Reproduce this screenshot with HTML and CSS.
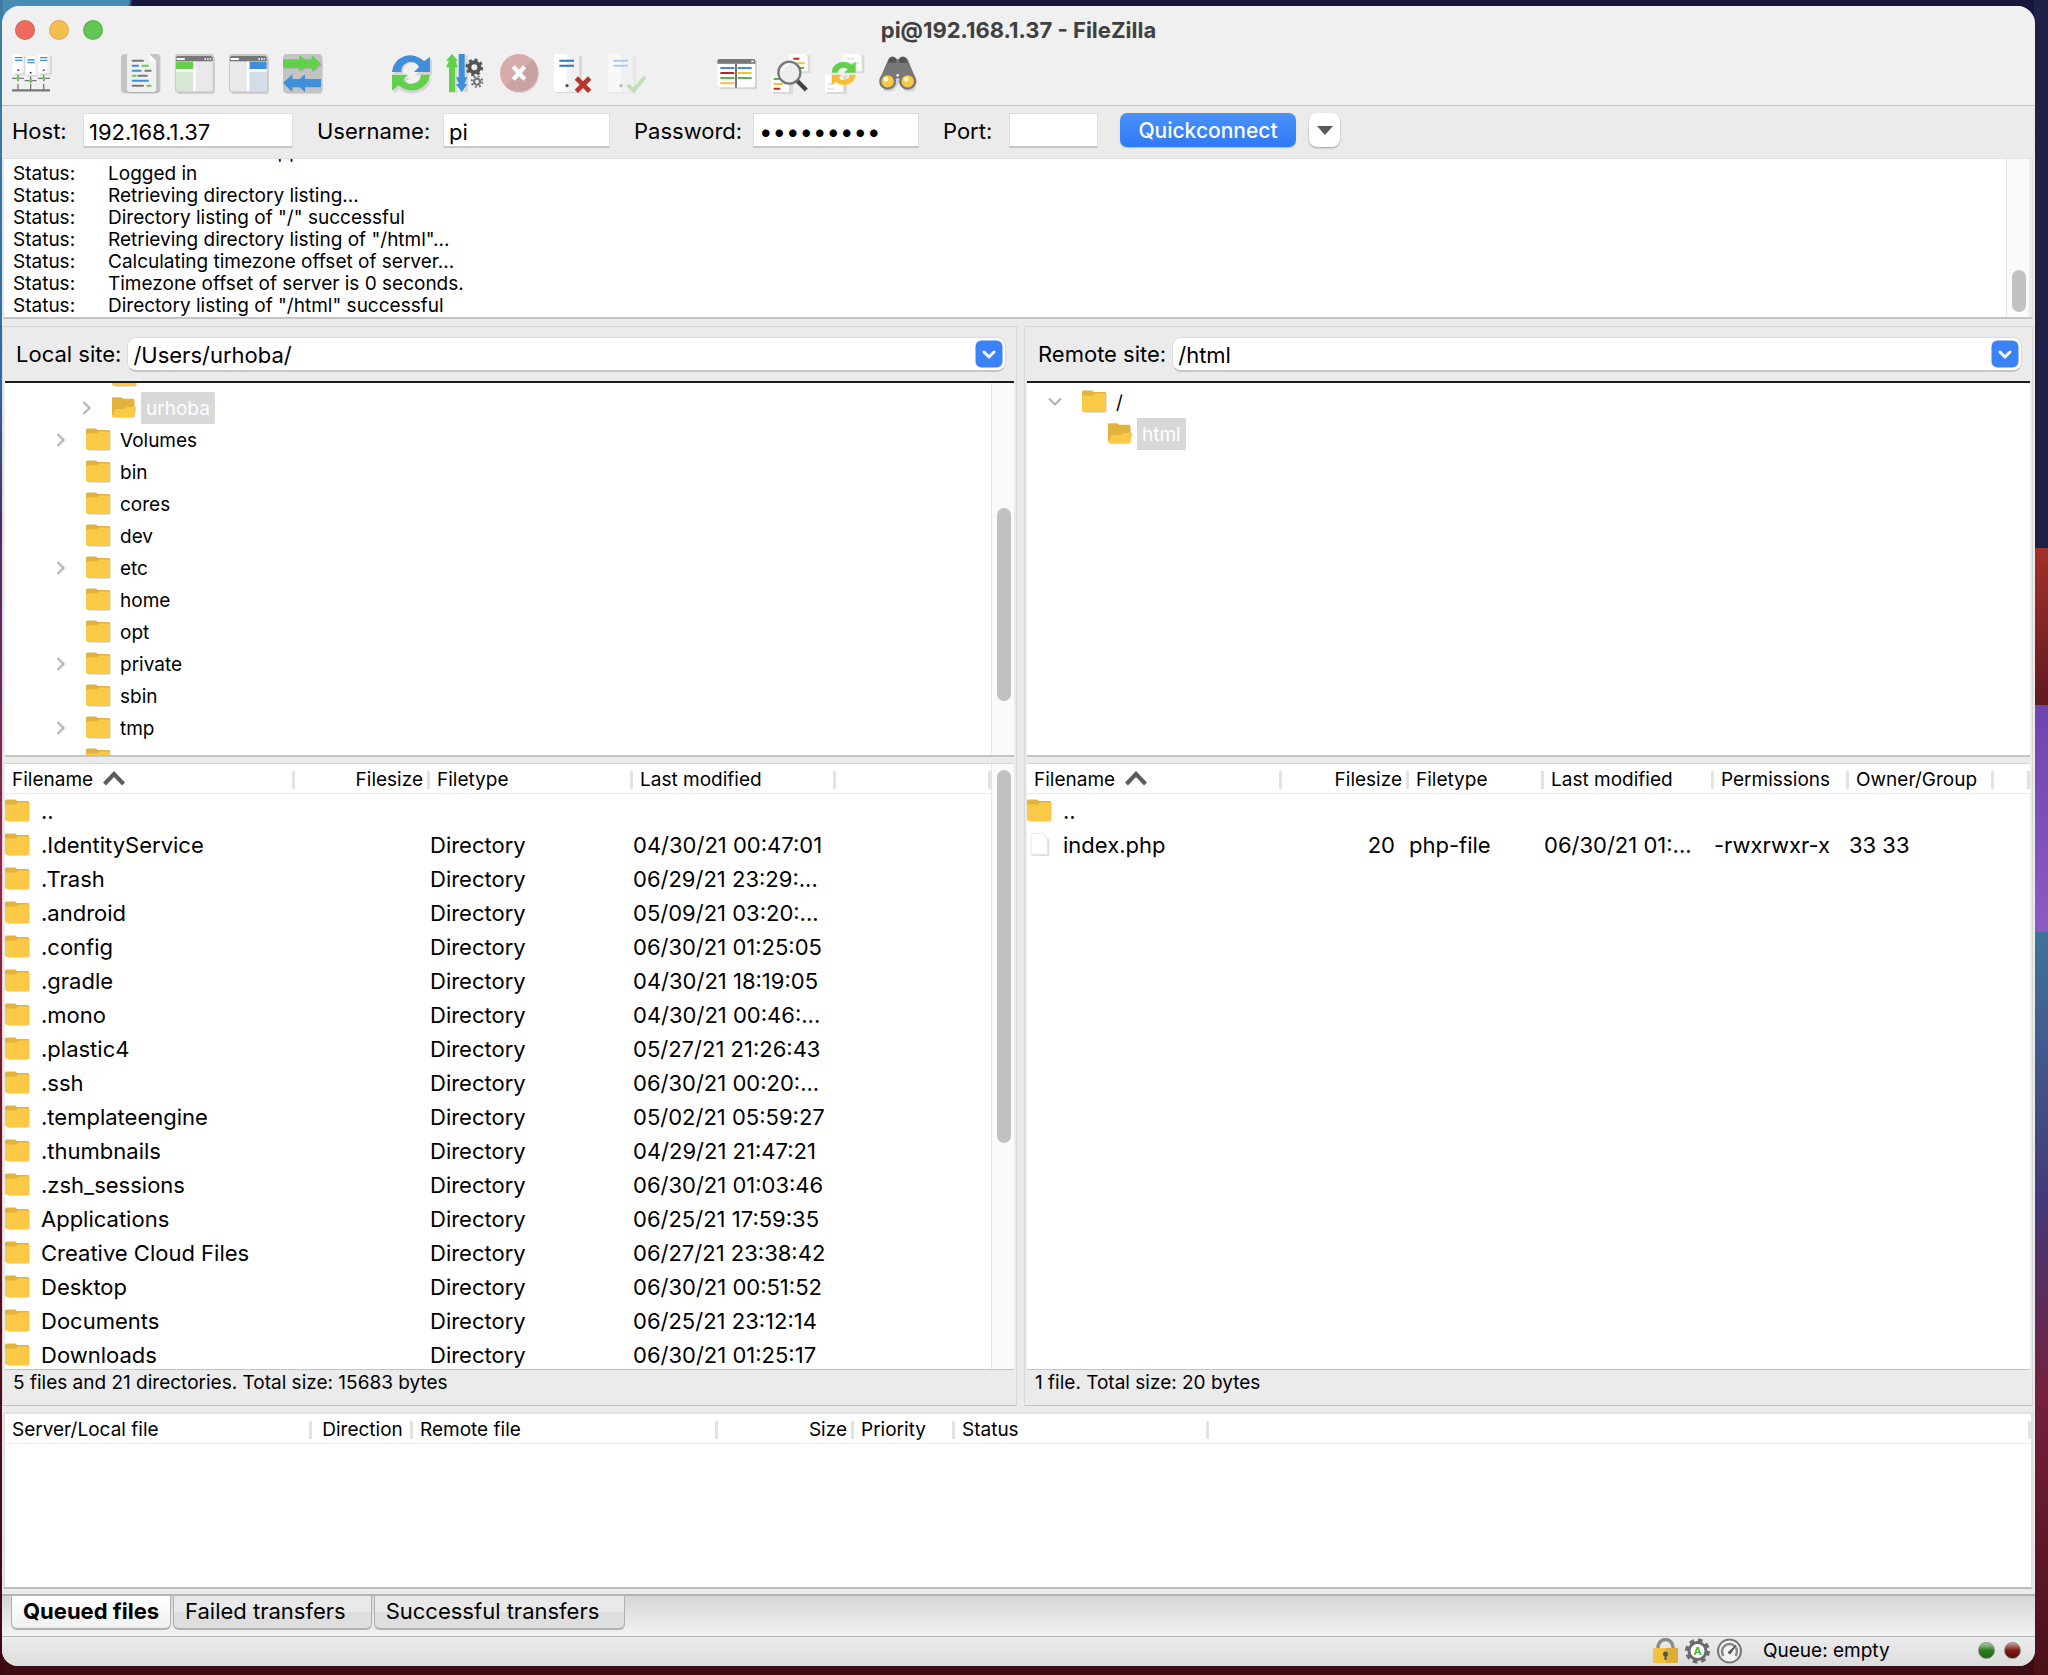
FILE: index.html
```
<!DOCTYPE html>
<html lang="en">
<head>
    <meta charset="UTF-8">
    <meta name="viewport" content="width=device-width, initial-scale=1.0">
    <title>pi@192.168.1.37 - FileZilla</title>
    <link rel="stylesheet" href="styles.css">
</head>
<body>

    <!-- shared icons -->
    <svg class="sprite" aria-hidden="true">
        <symbol id="folder" viewBox="0 0 26 24">
            <path d="M2 3h21a2 2 0 0 1 2 2v16a2 2 0 0 1-2 2H3z" fill="#dedede"/>
            <path d="M0 2a1.500 1.500 0 0 1 1.500-1.500H10l2 1.500h11a1 1 0 0 1 1 1v6H0z" fill="#e2b33c"/>
            <path d="M0 5.500h10.500l3-2H23a1 1 0 0 1 1 1V20a2 2 0 0 1-2 2H2a2 2 0 0 1-2-2z" fill="#fac945"/>
        </symbol>
        <symbol id="folder-open" viewBox="0 0 28 24">
            <path d="M2 4h23v17l-2 2H3z" fill="#dedede"/>
            <path d="M0 2a1.500 1.500 0 0 1 1.500-1.500H10l2 1.500h11a1 1 0 0 1 1 1v17H0z" fill="#e2b33c"/>
            <path d="M0 22l3.500-9h10l2.500-2h10.500L24 20.500a2 2 0 0 1-2 1.500z" fill="#fac945"/>
        </symbol>
        <symbol id="file" viewBox="0 0 26 26">
            <path d="M5 1h12l6 6v17a1 1 0 0 1-1 1H5a1 1 0 0 1-1-1V2a1 1 0 0 1 1-1z" fill="#dcdcdc"/>
            <path d="M4 .5h12L21 6v17H3.500V1z" fill="#fff" stroke="#e6e6e6"/>
        </symbol>
        <symbol id="right" viewBox="0 0 10 14">
            <path d="M1.500 1l6 6-6 6" fill="none" stroke="#b4b4b4" stroke-width="2.200"/>
        </symbol>
        <symbol id="down" viewBox="0 0 14 10">
            <path d="M1 1.500l6 6 6-6" fill="none" stroke="#b4b4b4" stroke-width="2.200"/>
        </symbol>
        <symbol id="sort" viewBox="0 0 24 15">
            <path d="M2.500 13L12 3l9.500 10" fill="none" stroke="#5c5c5c" stroke-width="4"/>
        </symbol>
        <symbol id="pick" viewBox="0 0 28 28">
            <rect x=".5" y=".5" width="27" height="27" rx="6" fill="#3a82f7"/>
            <path d="M9 12l5 5 5-5" fill="none" stroke="#fff" stroke-width="3" stroke-linecap="round" stroke-linejoin="round"/>
        </symbol>
    </svg>

    <main class="window">
        <header class="top">
            <div class="titlebar">
                <div class="lights">
                    <button class="light close" aria-label="Close"></button>
                    <button class="light minimize" aria-label="Minimize"></button>
                    <button class="light maximize" aria-label="Maximize"></button>
                </div>
                <h1>pi@192.168.1.37 - FileZilla</h1>
            </div>

            <div class="toolbar">
                <button aria-label="Site Manager">
                    <svg viewBox="0 0 120 120">
                        <g fill="#d9d9d9"><path d="M8 6h32v58H8zM46 12h32v56H46zM84 6h36v58H84z"/></g>
                        <g fill="#fff"><path d="M0 0h30v58H0zM41 7h30v56H41zM77 0h30v58H77z"/></g>
                        <g fill="#f0f0f0"><path d="M30 0l6 5v50l-6 3zM71 7l6 5v50l-6 3zM107 0l7 5v50l-7 3z"/></g>
                        <g stroke="#3f8fdb" stroke-width="4"><path d="M9 11h22M9 19h22M46 18h22M46 26h22M84 11h22M84 19h22"/></g>
                        <g stroke="#777" stroke-width="4"><path d="M0 73h36M38 80h36M78 73h36M18 62v20M56 68v20M95 62v20M18 90v20M56 90v20M95 90v20"/></g>
                        <path d="M0 109h114" stroke="#777" stroke-width="7"/>
                        <g fill="#444"><circle cx="19" cy="49" r="3"/><circle cx="56" cy="56" r="3"/><circle cx="95" cy="49" r="3"/></g>
                        <g fill="#62d04b"><circle cx="18" cy="73" r="5"/><circle cx="56" cy="80" r="5"/><circle cx="95" cy="73" r="5"/></g>
                    </svg>
                </button>
                <span class="space"></span>
                <button aria-label="Toggle message log">
                    <svg viewBox="0 0 120 120">
                        <rect width="118" height="118" rx="12" fill="#c4c4c4"/>
                        <path d="M26 6h64l20 20v86a6 6 0 0 1-6 6H26z" fill="#b5b5b5"/>
                        <path d="M20 0h64l22 22v84a8 8 0 0 1-8 8H26a8 8 0 0 1-8-8V2z" fill="#f0f0f0"/>
                        <path d="M84 0l22 22H90a6 6 0 0 1-6-6z" fill="#fff"/>
                        <g fill="none" stroke-width="6" stroke-linecap="round">
                            <path d="M35 20h31M73 50h16M52 65h26M35 95h31" stroke="#777"/>
                            <path d="M35 35h16M35 50h24M35 80h46" stroke="#3f8fdb"/>
                            <path d="M64 35h17M35 65h9M79 95h10" stroke="#62d04b"/>
                        </g>
                    </svg>
                </button>
                <button aria-label="Toggle local directory tree">
                    <svg viewBox="0 0 120 120">
                        <rect x="6" y="6" width="114" height="114" rx="10" fill="#cfcfcf"/>
                        <rect width="116" height="116" rx="10" fill="#c9c9c9"/>
                        <path d="M3 22h110v82a8 8 0 0 1-8 8H11a8 8 0 0 1-8-8z" fill="#e9e9e9"/>
                        <path d="M3 22V12q0-6 6-6h98q6 0 6 6v10z" fill="#777"/>
                        <path d="M7 15h20" stroke="#fff" stroke-width="6" stroke-linecap="round"/>
                        <path d="M88 15h20" stroke="#fff" stroke-width="5" stroke-dasharray="5 3"/>
                        <path d="M3 23h52v22H3z" fill="#62d04b"/><path d="M3 45h52v8H3z" fill="#fff"/>
                        <path d="M3 53h52v59H10q-7 0-7-7z" fill="#d6e8d4"/><path d="M55 23h7v89h-7z" fill="#fff"/>
                    </svg>
                </button>
                <button aria-label="Toggle remote directory tree">
                    <svg viewBox="0 0 120 120">
                        <rect x="6" y="6" width="114" height="114" rx="10" fill="#cfcfcf"/>
                        <rect width="116" height="116" rx="10" fill="#c9c9c9"/>
                        <path d="M3 22h110v82a8 8 0 0 1-8 8H11a8 8 0 0 1-8-8z" fill="#e9e9e9"/>
                        <path d="M3 22V12q0-6 6-6h98q6 0 6 6v10z" fill="#777"/>
                        <path d="M7 15h20" stroke="#fff" stroke-width="6" stroke-linecap="round"/>
                        <path d="M88 15h20" stroke="#fff" stroke-width="5" stroke-dasharray="5 3"/>
                        <path d="M61 23h52v22H61z" fill="#3f8fdb"/><path d="M61 45h52v8H61z" fill="#fff"/>
                        <path d="M61 53h52v52q0 7-7 7H61z" fill="#d3dde8"/><path d="M54 23h7v89h-7z" fill="#fff"/>
                    </svg>
                </button>
                <button aria-label="Toggle transfer queue">
                    <svg viewBox="0 0 120 120">
                        <rect x="5" y="5" width="115" height="115" rx="12" fill="#dadada"/>
                        <rect width="118" height="118" rx="12" fill="#c4c4c4"/>
                        <path d="M4 22h50v-6l14 10h22V10l28 24-28 20V44H68L56 53v-9H4z" fill="#acacac"/>
                        <path d="M0 16h48V3l18 13h20V3l27 25-27 25V41H66L48 53V41H0z" fill="#62d04b"/>
                        <path d="M0 87l28-26v14h22l16-14v14h48v25H66v14L50 100H28v14z" fill="#3f8fdb"/>
                    </svg>
                </button>
                <span class="space"></span>
                <button aria-label="Refresh">
                    <svg viewBox="0 0 120 120">
                        <path d="M6 60a55 52 0 0 1 98-34l16-12v50H70l18-18A28 26 0 0 0 34 60zM6 118V72h48L38 88a30 26 0 0 0 50-14h30A57 50 0 0 1 22 104z" fill="#d5d5d5"/>
                        <path d="M0 54A55 54 0 0 1 96 22l18-14v46H66l15-15A28 28 0 0 0 28 54z" fill="#3f8fdb"/>
                        <path d="M114 62a55 52 0 0 1-94 32L0 110V62h48L34 77a28 25 0 0 0 52-15z" fill="#62d04b"/>
                    </svg>
                </button>
                <button aria-label="Process queue">
                    <svg viewBox="0 0 120 120">
                        <path d="M10 116V22h24v94zM44 4h22v110H44z" fill="#d8d8d8"/>
                        <path d="M0 20L18 0l18 20H28l8 20h-9v74H9V40H0l9-20z" fill="#62d04b"/>
                        <path d="M38 0h18v70h8l-9 20h9l-17 24-17-24h9l-9-20h8z" fill="#3f8fdb"/>
                        <g fill="none" stroke="#555">
                            <circle cx="85" cy="40" r="15" stroke-width="12"/>
                            <circle cx="85" cy="40" r="23" stroke-width="7" stroke-dasharray="9 9.060"/>
                            <circle cx="93" cy="83" r="9" stroke-width="7" stroke="#777"/>
                            <circle cx="93" cy="83" r="16" stroke-width="6" stroke="#777" stroke-dasharray="6 6.570"/>
                        </g>
                    </svg>
                </button>
                <button aria-label="Cancel" disabled>
                    <svg viewBox="0 0 120 120">
                        <circle cx="61" cy="61" r="57" fill="#ddd"/>
                        <circle cx="57" cy="57" r="57" fill="#d8acaa"/>
                        <path d="M98 16a57 57 0 0 1-81 81z" fill="#c9a3a1"/>
                        <path d="M40 38l34 38M74 38L40 76" stroke="#fff" stroke-width="13"/>
                    </svg>
                </button>
                <button aria-label="Disconnect">
                    <svg viewBox="0 0 120 120">
                        <path d="M8 6h76v112H8z" fill="#d9d9d9"/><path d="M3 0h50v114H8q-8 0-8-8V3q0-3 3-3z" fill="#fff"/>
                        <path d="M39 0h28l8 8v98l-8 8H39z" fill="#f1f1f1"/>
                        <path d="M16 20h44M16 35h44" stroke="#3274c4" stroke-width="6"/>
                        <circle cx="39" cy="95" r="5" fill="#555"/>
                        <path d="M67 72l40 40M107 72l-40 40" stroke="#b6352c" stroke-width="14"/>
                    </svg>
                </button>
                <button aria-label="Reconnect" disabled>
                    <svg viewBox="0 0 120 120">
                        <path d="M8 6h76v112H8z" fill="#e7e7e7"/><path d="M3 0h50v114H8q-8 0-8-8V3q0-3 3-3z" fill="#f8f8f8"/>
                        <path d="M39 0h28l8 8v98l-8 8H39z" fill="#f0f0f0"/>
                        <path d="M16 20h44M16 35h44" stroke="#b3c9e8" stroke-width="6"/>
                        <circle cx="39" cy="95" r="5" fill="#bbb"/>
                        <path d="M59 94l18 15 34-40" fill="none" stroke="#bfe0b6" stroke-width="12"/>
                    </svg>
                </button>
                <span class="space"></span>
                <button aria-label="Directory listing filters">
                    <svg viewBox="0 0 120 120">
                        <path d="M7 20h113v86H7z" fill="#d5d5d5"/>
                        <path d="M2 30h112v62q0 8-8 8H10q-8 0-8-8z" fill="#fff"/>
                        <path d="M1 29V21q0-6 6-6h102q6 0 6 6v8z" fill="#777"/>
                        <path d="M103 22h7" stroke="#fff" stroke-width="5"/>
                        <g stroke-width="6"><path d="M10 42h42M62 42h42" stroke="#3f8fdb"/><path d="M10 57h42" stroke="#b9291c"/><path d="M10 72h42M62 72h42" stroke="#52b93f"/><path d="M10 88h42M62 57h42" stroke="#f3c13d"/></g>
                        <path d="M57 29v72" stroke="#777" stroke-width="6"/>
                    </svg>
                </button>
                <button aria-label="Directory comparison">
                    <svg viewBox="0 0 120 120">
                        <path d="M58 4h60v54H58zM6 64h60v58H6z" fill="#dadada"/>
                        <path d="M54 0h48l8 8v44H54zM0 62h54v52H6q-6 0-6-6z" fill="#fff"/>
                        <g stroke-width="6"><path d="M67 14h18M8 104h20" stroke="#b9291c"/><path d="M78 28h24M8 90h28" stroke="#f3c13d"/><path d="M85 42h14M8 75h18" stroke="#52b93f"/></g>
                        <path d="M76 78l30 30" stroke="#444" stroke-width="13"/>
                        <circle cx="55" cy="56" r="33" fill="#ededed" stroke="#777" stroke-width="7"/>
                        <path d="M33 52q4-18 20-20" stroke="#fff" stroke-width="6" fill="none"/>
                    </svg>
                </button>
                <button aria-label="Synchronized browsing">
                    <svg viewBox="0 0 120 120">
                        <path d="M58 4h60v54H58zM6 64h60v58H6z" fill="#dadada"/>
                        <path d="M54 0h48l8 8v44H54zM0 62h54v52H6q-6 0-6-6z" fill="#fff"/>
                        <path d="M67 14h20M67 28h36M8 90h20M8 104h20" stroke="#e5e5e5" stroke-width="6"/>
                        <path d="M20 56a36 34 0 0 1 60-24l12-9v33H58l10-10a18 18 0 0 0-30 10z" fill="#62d04b"/>
                        <path d="M92 62a36 34 0 0 1-60 22l-12 9V62h32L42 72a18 16 0 0 0 32-10z" fill="#f5bf35"/>
                    </svg>
                </button>
                <button aria-label="Search remote files">
                    <svg viewBox="0 0 120 120">
                        <path d="M10 78L38 18q10-12 18 2 12-14 24 0l36 60-10 32H78l-18-24-18 24H14z" fill="#d2d2d2"/>
                        <path d="M2 76L28 16q10-16 24-2 4 4 8 0 14-14 26 2l25 60-24 12-31-16-28 16z" fill="#777"/>
                        <path d="M30 14q10-12 22 0v12H27zM60 14q12-12 22 0l4 12H60z" fill="#555"/>
                        <circle cx="26" cy="82" r="22" fill="#fac945" stroke="#777" stroke-width="7"/>
                        <circle cx="86" cy="82" r="22" fill="#fac945" stroke="#777" stroke-width="7"/>
                        <circle cx="21" cy="76" r="7" fill="#fff6d8"/><circle cx="82" cy="76" r="7" fill="#fff6d8"/>
                        <circle cx="56" cy="64" r="4" fill="#fff"/>
                    </svg>
                </button>
            </div>
        </header>

        <form class="quickconnect">
            <label for="host">Host:</label>
            <input class="field" type="text" id="host" value="192.168.1.37">
            <label for="username">Username:</label>
            <input class="field" type="text" id="username" value="pi">
            <label for="password">Password:</label>
            <input class="field" type="password" id="password" value="raspberry">
            <label for="port">Port:</label>
            <input class="field" type="text" id="port">
            <button type="button" class="connect">Quickconnect</button>
            <button type="button" class="history" aria-label="History">
                <svg viewBox="0 0 16 9"><path d="M0 0h16L8 9z" fill="#5a5a5a"/></svg>
            </button>
        </form>

        <section class="log">
            <dl>
                <dt>Status:</dt><dd>Server does not support non-ASCII characters.</dd>
                <dt>Status:</dt><dd>Logged in</dd>
                <dt>Status:</dt><dd>Retrieving directory listing...</dd>
                <dt>Status:</dt><dd>Directory listing of "/" successful</dd>
                <dt>Status:</dt><dd>Retrieving directory listing of "/html"...</dd>
                <dt>Status:</dt><dd>Calculating timezone offset of server...</dd>
                <dt>Status:</dt><dd>Timezone offset of server is 0 seconds.</dd>
                <dt>Status:</dt><dd>Directory listing of "/html" successful</dd>
            </dl>
            <div class="scrollbar log-scroll"><span class="thumb"></span></div>
        </section>

        <div class="panes">
            <section class="pane">
                <div class="site">
                    <label for="local-site">Local site:</label>
                    <div class="combo">
                        <select id="local-site"><option>/Users/urhoba/</option></select>
                        <svg><use href="#pick"/></svg>
                    </div>
                </div>
                <div class="tree">
                    <ul class="scrolled">
                        <li class="deep"><svg class="folder"><use href="#folder"/></svg></li>
                        <li class="deep"><svg class="arrow"><use href="#right"/></svg><svg class="folder"><use href="#folder-open"/></svg><span class="selected">urhoba</span></li>
                        <li><svg class="arrow"><use href="#right"/></svg><svg class="folder"><use href="#folder"/></svg><span>Volumes</span></li>
                        <li><svg class="folder"><use href="#folder"/></svg><span>bin</span></li>
                        <li><svg class="folder"><use href="#folder"/></svg><span>cores</span></li>
                        <li><svg class="folder"><use href="#folder"/></svg><span>dev</span></li>
                        <li><svg class="arrow"><use href="#right"/></svg><svg class="folder"><use href="#folder"/></svg><span>etc</span></li>
                        <li><svg class="folder"><use href="#folder"/></svg><span>home</span></li>
                        <li><svg class="folder"><use href="#folder"/></svg><span>opt</span></li>
                        <li><svg class="arrow"><use href="#right"/></svg><svg class="folder"><use href="#folder"/></svg><span>private</span></li>
                        <li><svg class="folder"><use href="#folder"/></svg><span>sbin</span></li>
                        <li><svg class="arrow"><use href="#right"/></svg><svg class="folder"><use href="#folder"/></svg><span>tmp</span></li>
                        <li><svg class="folder"><use href="#folder"/></svg></li>
                    </ul>
                    <div class="scrollbar tree-scroll"><span class="thumb"></span></div>
                </div>
                <div class="files">
                    <div class="list">
                        <table>
                            <colgroup><col class="w-name"><col class="w-size"><col class="w-type"><col class="w-date"><col></colgroup>
                            <thead>
                                <tr><th>Filename<svg class="sort"><use href="#sort"/></svg></th><th class="num">Filesize</th><th>Filetype</th><th>Last modified</th><th></th></tr>
                            </thead>
                            <tbody>
                                <tr><td><svg class="folder"><use href="#folder"/></svg>..</td><td></td><td></td><td></td><td></td></tr>
                                <tr><td><svg class="folder"><use href="#folder"/></svg>.IdentityService</td><td></td><td>Directory</td><td>04/30/21 00:47:01</td><td></td></tr>
                                <tr><td><svg class="folder"><use href="#folder"/></svg>.Trash</td><td></td><td>Directory</td><td>06/29/21 23:29:...</td><td></td></tr>
                                <tr><td><svg class="folder"><use href="#folder"/></svg>.android</td><td></td><td>Directory</td><td>05/09/21 03:20:...</td><td></td></tr>
                                <tr><td><svg class="folder"><use href="#folder"/></svg>.config</td><td></td><td>Directory</td><td>06/30/21 01:25:05</td><td></td></tr>
                                <tr><td><svg class="folder"><use href="#folder"/></svg>.gradle</td><td></td><td>Directory</td><td>04/30/21 18:19:05</td><td></td></tr>
                                <tr><td><svg class="folder"><use href="#folder"/></svg>.mono</td><td></td><td>Directory</td><td>04/30/21 00:46:...</td><td></td></tr>
                                <tr><td><svg class="folder"><use href="#folder"/></svg>.plastic4</td><td></td><td>Directory</td><td>05/27/21 21:26:43</td><td></td></tr>
                                <tr><td><svg class="folder"><use href="#folder"/></svg>.ssh</td><td></td><td>Directory</td><td>06/30/21 00:20:...</td><td></td></tr>
                                <tr><td><svg class="folder"><use href="#folder"/></svg>.templateengine</td><td></td><td>Directory</td><td>05/02/21 05:59:27</td><td></td></tr>
                                <tr><td><svg class="folder"><use href="#folder"/></svg>.thumbnails</td><td></td><td>Directory</td><td>04/29/21 21:47:21</td><td></td></tr>
                                <tr><td><svg class="folder"><use href="#folder"/></svg>.zsh_sessions</td><td></td><td>Directory</td><td>06/30/21 01:03:46</td><td></td></tr>
                                <tr><td><svg class="folder"><use href="#folder"/></svg>Applications</td><td></td><td>Directory</td><td>06/25/21 17:59:35</td><td></td></tr>
                                <tr><td><svg class="folder"><use href="#folder"/></svg>Creative Cloud Files</td><td></td><td>Directory</td><td>06/27/21 23:38:42</td><td></td></tr>
                                <tr><td><svg class="folder"><use href="#folder"/></svg>Desktop</td><td></td><td>Directory</td><td>06/30/21 00:51:52</td><td></td></tr>
                                <tr><td><svg class="folder"><use href="#folder"/></svg>Documents</td><td></td><td>Directory</td><td>06/25/21 23:12:14</td><td></td></tr>
                                <tr><td><svg class="folder"><use href="#folder"/></svg>Downloads</td><td></td><td>Directory</td><td>06/30/21 01:25:17</td><td></td></tr>
                            </tbody>
                        </table>
                    </div>
                    <div class="scrollbar list-scroll"><span class="thumb"></span></div>
                </div>
                <p class="summary">5 files and 21 directories. Total size: 15683 bytes</p>
            </section>

            <section class="pane">
                <div class="site">
                    <label for="remote-site">Remote site:</label>
                    <div class="combo">
                        <select id="remote-site"><option>/html</option></select>
                        <svg><use href="#pick"/></svg>
                    </div>
                </div>
                <div class="tree">
                    <ul>
                        <li class="root"><svg class="arrow wide"><use href="#down"/></svg><svg class="folder"><use href="#folder"/></svg><span>/</span></li>
                        <li><svg class="folder"><use href="#folder-open"/></svg><span class="selected">html</span></li>
                    </ul>
                </div>
                <div class="files">
                    <div class="list">
                        <table>
                            <colgroup><col class="r-name"><col class="r-size"><col class="r-type"><col class="r-date"><col class="r-perm"><col class="r-owner"><col></colgroup>
                            <thead>
                                <tr><th>Filename<svg class="sort"><use href="#sort"/></svg></th><th class="num">Filesize</th><th>Filetype</th><th>Last modified</th><th>Permissions</th><th>Owner/Group</th><th></th></tr>
                            </thead>
                            <tbody>
                                <tr><td><svg class="folder"><use href="#folder"/></svg>..</td><td></td><td></td><td></td><td></td><td></td><td></td></tr>
                                <tr><td><svg class="folder"><use href="#file"/></svg>index.php</td><td class="num">20</td><td>php-file</td><td>06/30/21 01:...</td><td>-rwxrwxr-x</td><td>33 33</td><td></td></tr>
                            </tbody>
                        </table>
                    </div>
                </div>
                <p class="summary">1 file. Total size: 20 bytes</p>
            </section>
        </div>

        <section class="queue">
            <table>
                <colgroup><col class="q-server"><col class="q-dir"><col class="q-remote"><col class="q-size"><col class="q-prio"><col class="q-status"><col></colgroup>
                <thead>
                    <tr><th>Server/Local file</th><th class="mid">Direction</th><th>Remote file</th><th class="num">Size</th><th>Priority</th><th>Status</th><th></th></tr>
                </thead>
            </table>
        </section>

        <nav class="tabs">
            <button class="active">Queued files</button>
            <button>Failed transfers</button>
            <button>Successful transfers</button>
        </nav>

        <footer class="statusbar">
            <svg viewBox="0 0 25 26">
                <path d="M5 13V9a7.500 7.500 0 0 1 15 0v4" fill="none" stroke="#8c8c8c" stroke-width="3.500"/>
                <rect y="10" width="25" height="15" rx="1.500" fill="#f3c13d"/><path d="M12.500 10H25v13.500a1.500 1.500 0 0 1-1.500 1.500h-11z" fill="#ddae37"/>
                <circle cx="12.500" cy="16" r="2.500" fill="#555"/><path d="M11.500 16h2v6h-2z" fill="#555"/>
            </svg>
            <svg viewBox="0 0 25 26">
                <circle cx="12.500" cy="13" r="10.500" fill="none" stroke="#6b6b6b" stroke-width="4" stroke-dasharray="4.500 3.750"/>
                <circle cx="12.500" cy="13" r="8.500" fill="#fff" stroke="#6b6b6b" stroke-width="3"/>
                <text x="12.500" y="17" class="auto">A</text>
            </svg>
            <svg viewBox="0 0 25 26">
                <circle cx="12.500" cy="13" r="11.500" fill="#f4f4f4" stroke="#777" stroke-width="2"/>
                <path d="M6.500 18a7.500 7.500 0 1 1 12 0" fill="none" stroke="#8a8a8a" stroke-width="2.500"/>
                <path d="M11 14.500l8-7-6 8.500z" fill="#555" stroke="#555"/>
            </svg>
            <span class="queue-state">Queue: empty</span>
            <i class="led green"></i>
            <i class="led red"></i>
        </footer>
    </main>

</body>
</html>
```
FILE: styles.css
```
* {
    box-sizing: border-box;
}

body {
    margin: 0;
    height: 100vh;
    display: flex;
    padding: 6px 13px 9px 2px;
    font-family: Inter, "Liberation Sans", sans-serif;
    font-size: 22px;
    color: #000;
    /* desktop wallpaper showing around the window */
    background:
        linear-gradient(#1f2148 0, #1c1f46 548px, #a3302a 548px, #611a20 705px, #6d45b0 705px, #8c5bc0 932px, #40739b 932px, #44397a 1200px, #75203a 1400px, #4a1018 100%) right / 14px 100% no-repeat,
        linear-gradient(#3f7fa5 0, #2d6aa0 380px, #4b2a6b 520px, #9b2447 900px, #5a0f24 1200px, #3a0712 100%) left / 3px 100% no-repeat,
        linear-gradient(100deg, #4a8db3 0, #4a8db3 127px, #17163c 131px) top / 100% 30px no-repeat,
        #3c0b14;
}

.sprite {
    position: absolute;
    width: 0;
    height: 0;
}

button {
    font-family: inherit;
    padding: 0;
    border: none;
    background: none;
    color: #000;
}

.window {
    flex: 1;
    min-width: 0;
    display: flex;
    flex-direction: column;
    background: #ebebeb;
    border-radius: 18px 18px 16px 16px;
    overflow: hidden;
}

/* Title bar and toolbar */
.top {
    flex: none;
    background: #f0f0f0;
    border-bottom: 1px solid #c3c3c3;
    height: 100px;
}

.titlebar {
    display: grid;
    grid-template-columns: 1fr auto 1fr;
    align-items: center;
    height: 48px;
    padding: 0 13px;
}

.lights {
    display: flex;
    gap: 14px;
}

.light {
    width: 20px;
    height: 20px;
    border-radius: 50%;
    border: 1px solid #0000001a;
}

.close { background: #ed6a5e; }
.minimize { background: #f5bf4f; }
.maximize { background: #62c554; }

h1 {
    margin: 0;
    font-size: 22px;
    line-height: 24px;
    font-weight: 700;
    color: #404040;
}

.toolbar {
    display: flex;
    gap: 14px;
    padding: 0 10px;
}

.toolbar button,
.toolbar svg {
    display: block;
    width: 40px;
    height: 40px;
}

.space {
    width: 41px;
}

/* Quickconnect */
.quickconnect {
    flex: none;
    height: 52px;
    display: grid;
    grid-template-columns: 71px 234px 126px 191px 119px 190px 66px 111px 176px 44px;
    padding: 7px 10px 10px;
}

.quickconnect label {
    line-height: 36px;
}

.field {
    height: 35px;
    margin-right: 24px;
    min-width: 0;
    padding: 3px 5px 0;
    border: 1px solid #dedede;
    border-bottom: 2px solid #c6c6c6;
    border-radius: 0;
    background: #fff;
    font: inherit;
}

#password {
    font-size: 24px;
}

#port {
    margin-right: 22px;
}

.connect {
    height: 34px;
    border-radius: 7px;
    background: linear-gradient(#4a93f8, #2f78f6);
    box-shadow: 0 1px 1px #0003;
    color: #fff;
    font-size: 21px;
    font-weight: 500;
}

.history {
    width: 31px;
    height: 34px;
    margin-left: 13px;
    border-radius: 8px;
    background: #fff;
    box-shadow: 0 1px 2px #0005;
}

.history svg {
    display: block;
    width: 16px;
    height: 9px;
    margin: auto;
}

/* Scrollbars */
.scrollbar {
    flex: none;
    display: flex;
    flex-direction: column;
    width: 23px;
    padding: 0 3px 0 5px;
    background: #fafafa;
    border-left: 1px solid #e6e6e6;
}

.thumb {
    width: 14px;
    height: 42px;
    border-radius: 7px;
    background: #c1c1c1;
}

.log-scroll { padding-top: 111px; }
.tree-scroll { padding-top: 125px; }
.tree-scroll .thumb { height: 193px; }
.list-scroll { padding-top: 6px; }
.list-scroll .thumb { height: 373px; }

/* Message log */
.log {
    flex: none;
    height: 161px;
    display: flex;
    margin: 0 2px 0 1px;
    padding-right: 3px;
    border: 1px solid #e0e0e0;
    border-bottom: 2px solid #c4c4c4;
}

.log dl {
    flex: 1;
    margin: 0;
    padding-left: 9px;
    display: grid;
    grid-template-columns: 95px 1fr;
    align-content: end;
    overflow: hidden;
    background: #fff;
    font-size: 19px;
    line-height: 22px;
}

.log dd {
    margin: 0;
}

/* Local and remote panes */
.panes {
    flex: 1;
    min-height: 0;
    display: grid;
    grid-template-columns: 1015fr 1009fr;
    grid-template-rows: minmax(0, 1fr);
    gap: 7px;
    margin: 7px 0 6px;
    padding-right: 2px;
}

.pane {
    display: flex;
    flex-direction: column;
    min-width: 0;
    padding: 0 2px;
    border: 1px solid #d8d8d8;
    border-bottom-color: #c0c0c0;
}

.site {
    flex: none;
    display: flex;
    align-items: center;
    height: 54px;
    padding: 0 8px 0 11px;
}

.combo {
    position: relative;
    flex: 1;
    margin-left: 6px;
}

.combo select {
    display: block;
    width: 100%;
    height: 35px;
    padding: 3px 5px 0;
    border: 1px solid #dcdcdc;
    border-bottom: 2px solid #c6c6c6;
    border-radius: 9px;
    background: #fff;
    appearance: none;
    font: inherit;
    color: #000;
}

.combo svg {
    position: absolute;
    top: 3px;
    right: 3px;
    width: 28px;
    height: 28px;
    pointer-events: none;
}

.tree {
    flex: none;
    height: 376px;
    display: flex;
    margin-bottom: 6px;
    border-top: 2px solid #1c1c1c;
    border-bottom: 2px solid #c4c4c4;
    background: #fff;
    overflow: hidden;
    font-size: 19px;
}

.tree ul {
    flex: 1;
    margin: 3px 0 0;
    padding: 0;
    list-style: none;
}

.tree ul.scrolled {
    margin-top: -23px;
}

.tree li {
    display: flex;
    align-items: center;
    height: 32px;
    padding-left: 81px;
}

.tree li.deep {
    padding-left: 107px;
}

.tree li.root {
    padding-left: 55px;
}

.arrow {
    width: 10px;
    height: 14px;
    margin: 0 20px 0 -30px;
    overflow: visible;
}

.arrow.wide {
    width: 14px;
    height: 10px;
    margin: 0 20px 0 -34px;
}

.folder {
    flex: none;
    width: 26px;
    height: 24px;
}

.tree li span {
    height: 32px;
    line-height: 34px;
    padding: 0 5px;
    margin-left: 3px;
}

.tree .selected {
    background: #d8d8d8;
    color: #fff;
}

.files {
    flex: 1;
    display: flex;
    min-height: 0;
    border-top: 1px solid #d6d6d6;
    background: #fff;
}

.list {
    flex: 1;
    min-width: 0;
    overflow: hidden;
}

table {
    width: 100%;
    border-collapse: collapse;
    table-layout: fixed;
}

th {
    height: 29px;
    padding: 4px 7px 0;
    border-bottom: 1px solid #ececec;
    background: linear-gradient(#e3e3e3, #e3e3e3) right 7px / 3px 18px no-repeat;
    font-size: 19px;
    font-weight: 400;
    line-height: 22px;
    text-align: left;
    white-space: nowrap;
}

td {
    height: 34px;
    padding: 0;
    line-height: 34px;
    white-space: nowrap;
}

td .folder {
    float: left;
    margin: 5px 10px 0 0;
}

.num {
    text-align: right;
}

td.num {
    padding-right: 14px;
}

.sort {
    width: 24px;
    height: 15px;
    margin-left: 9px;
}

.w-name { width: 290px; }
.w-size { width: 135px; }
.w-type { width: 203px; }
.w-date { width: 203px; }

.r-name { width: 255px; }
.r-size { width: 127px; }
.r-type { width: 135px; }
.r-date { width: 170px; }
.r-perm { width: 135px; }
.r-owner { width: 145px; }

.summary {
    flex: none;
    height: 36px;
    margin: 0;
    padding-left: 8px;
    border-top: 1px solid #c4c4c4;
    font-size: 19px;
    line-height: 26px;
}

/* Transfer queue */
.queue {
    flex: none;
    height: 177px;
    margin: 0 2px 0 1px;
    border: 2px solid #e0e0e0;
    border-bottom: 2px solid #bdbdbd;
    background: #fff;
}

.queue .mid {
    text-align: center;
}

.q-server { width: 307px; }
.q-dir { width: 101px; }
.q-remote { width: 305px; }
.q-size { width: 136px; }
.q-prio { width: 101px; }
.q-status { width: 254px; }

.tabs {
    flex: none;
    display: flex;
    gap: 2px;
    height: 42px;
    margin-top: 5px;
    padding: 0 9px 6px;
    border-top: 2px solid #b4b4b4;
    background: linear-gradient(#d6d6d6, #f2f2f2);
}

.tabs button {
    padding: 0 25px 3px 11px;
    border: 1px solid #b0b0b0;
    border-top: none;
    border-bottom-width: 2px;
    border-radius: 0 0 6px 6px;
    background: linear-gradient(#e9e9e9 50%, #dedede 50%);
    font-size: 22px;
}

.tabs .active {
    padding: 0 11px 3px;
    background: linear-gradient(#fff, #f0f0f0);
    font-weight: 700;
}

.statusbar {
    flex: none;
    display: flex;
    align-items: center;
    height: 30px;
    padding: 0 14px 2px 0;
    border-top: 1px solid #b6b6b6;
    background: linear-gradient(#ececec, #dcdcdc);
    font-size: 19px;
}

.statusbar svg {
    width: 25px;
    height: 26px;
    margin-right: 7px;
}

.statusbar svg:first-child {
    margin-left: auto;
}

.auto {
    font-size: 11px;
    font-weight: 700;
    fill: #3fb52c;
    text-anchor: middle;
}

.queue-state {
    width: 206px;
    margin-left: 14px;
}

.led {
    width: 17px;
    height: 17px;
    margin-left: 9px;
    border-radius: 50%;
    border: 1px solid #888;
}

.led.green { background: linear-gradient(#a9cf9f, #2c7a1d 50%, #1e6a10); }
.led.red { background: linear-gradient(#c99a96, #7c1a14 50%, #5c0a06); }
```
